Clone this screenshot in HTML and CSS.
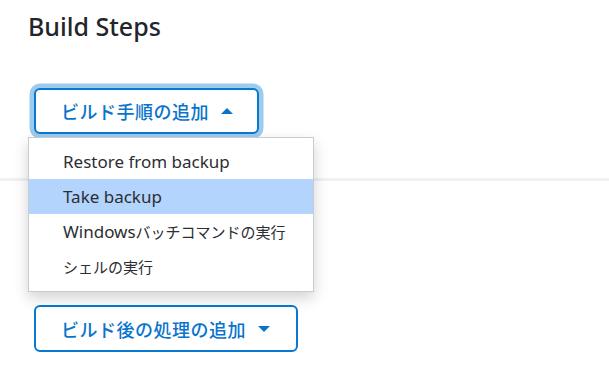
FILE: index.html
```html
<!DOCTYPE html>
<html lang="ja">
<head>
<meta charset="utf-8">
<link rel="stylesheet" href="styles.css">
</head>
<body>
<div class="page">
  <h2 class="title">Build Steps</h2>
  <div class="steps">
    <button class="add-btn focused" type="button">ビルド手順の追加<span class="caret up"></span></button>
    <div class="divider"></div>
    <button class="add-btn post" type="button">ビルド後の処理の追加<span class="caret down"></span></button>
    <ul class="menu">
      <li class="item">Restore from backup</li>
      <li class="item active">Take backup</li>
      <li class="item">Windows<span class="ja">バッチコマンドの実行</span></li>
      <li class="item"><span class="ja">シェルの実行</span></li>
    </ul>
  </div>
</div>
</body>
</html>
```

FILE: styles.css
```css
* { box-sizing: border-box; }
html, body { margin: 0; padding: 0; background: #fff; }
body {
  font-family: "Noto Sans", "Noto Sans CJK JP", sans-serif;
  color: #1f2328;
  width: 609px;
  height: 377px;
  overflow: hidden;
}
.page { padding-top: 9px; }
.title {
  margin: 0 0 0 28px;
  font-size: 25px;
  line-height: 34px;
  font-weight: 500;
  color: #22252b;
}
.steps {
  position: relative;
  margin-top: 45px;
}
.add-btn {
  display: flex;
  align-items: center;
  margin-left: 34px;
  padding: 0 0 0 25px;
  height: 46px;
  background: #fff;
  border: 2.5px solid #0878d0;
  border-radius: 6px;
  color: #0874cc;
  font-family: "Noto Sans CJK JP", sans-serif;
  font-size: 18px;
  font-weight: 500;
  letter-spacing: 0.5px;
}
.add-btn.focused {
  width: 225px;
  box-shadow: 0 0 0 4.5px #9dcbee;
}
.add-btn.post {
  width: 264px;
  height: 47px;
}
.caret {
  width: 0;
  height: 0;
  margin-left: 12px;
  border-left: 6px solid transparent;
  border-right: 6px solid transparent;
}
.caret.up { border-bottom: 6px solid #0874cc; }
.caret.down { border-top: 6px solid #0874cc; }
.divider {
  margin: 44px 0 124px 0;
  height: 3px;
  background: #f1f1f5;
}
.menu {
  position: absolute;
  left: 28px;
  top: 49px;
  width: 286px;
  margin: 0;
  padding: 6px 0 7px;
  list-style: none;
  background: #fff;
  border: 1px solid #c9cccf;
  box-shadow: 0 6px 14px rgba(0, 0, 0, 0.18);
}
.item {
  height: 35px;
  line-height: 35px;
  padding-left: 34px;
  font-size: 17px;
  color: #2b2e33;
  font-family: "Noto Sans", "Noto Sans CJK JP", sans-serif;
}
.item .ja {
  font-family: "Noto Sans CJK JP", sans-serif;
  font-size: 15px;
}
.item.active { background: #b3d4fc; }
```
